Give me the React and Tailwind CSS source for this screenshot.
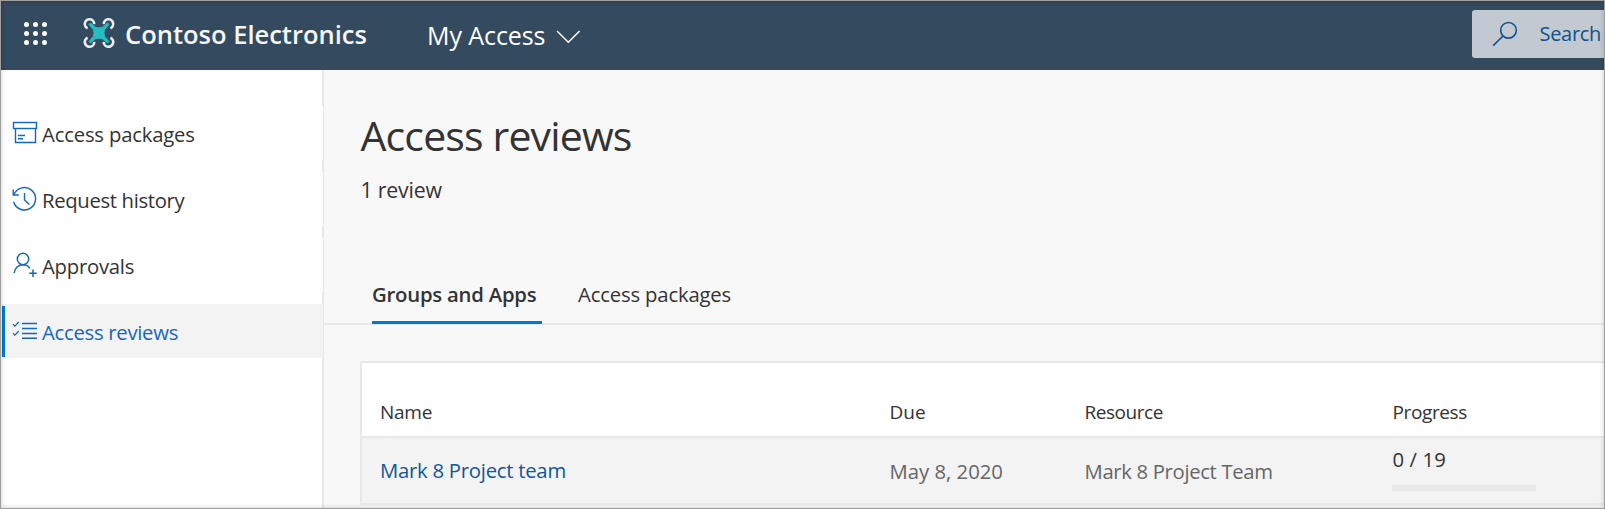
import React from "react";

function PackageIcon() {
  return (
    <svg width="26" height="26" viewBox="0 0 26 26" fill="none" stroke="#1467c0" strokeWidth="1.4">
      <rect x="1.5" y="2.5" width="23" height="6" />
      <path d="M3.5 8.5V22.5H23.5V8.5" />
      <path d="M6 15.5h7M6 18.7h5" />
    </svg>
  );
}

function HistoryIcon() {
  return (
    <svg width="26" height="26" viewBox="0 0 26 26" fill="none" stroke="#1467c0" strokeWidth="1.4">
      <path d="M2 8.6A11.2 11.2 0 1 1 1.6 15.8" />
      <path d="M1.2 3.6V9H6.8" />
      <path d="M12.5 7V14L17.5 18.5" />
    </svg>
  );
}

function ApprovalIcon() {
  return (
    <svg width="26" height="26" viewBox="0 0 26 26" fill="none" stroke="#1467c0" strokeWidth="1.5">
      <circle cx="11" cy="7" r="5.7" />
      <path d="M2.2 21C2.6 15.8 6.5 12.8 11 12.8c2.8 0 5.4 1.3 7 3.6" />
      <path d="M21 17.5v7.5M17.2 21.3h7.6" />
    </svg>
  );
}

function ReviewIcon() {
  return (
    <svg width="26" height="26" viewBox="0 0 26 26" fill="none" stroke="#1467c0" strokeWidth="1.4">
      <path d="M10 5.5h15M10 10.5h15M10 15.5h15M10 20.2h15" />
      <path d="M1 6.2l1.9 1.9L6.8 4M1 15.2l1.9 1.9L6.8 13" strokeWidth="1.2" />
    </svg>
  );
}

function DroneLogo() {
  return (
    <svg width="34" height="34" viewBox="0 0 34 34" fill="none">
      <g stroke="#e9edf0" strokeWidth="2.6">
        <path d="M5.6 12.2A4.7 4.7 0 1 1 12.2 8.2" />
        <path d="M21.8 8.2A4.7 4.7 0 1 1 28.4 12.2" />
        <path d="M5.6 21.8A4.7 4.7 0 1 0 12.2 25.8" />
        <path d="M21.8 25.8A4.7 4.7 0 1 0 28.4 21.8" />
      </g>
      <path
        d="M8.4 7L13.6 11.2Q17 12.6 20.4 11.2L25.6 7L27 8.4L22.6 13.6Q21.2 17 22.6 20.4L27 25.6L25.6 27L20.4 22.8Q17 21.4 13.6 22.8L8.4 27L7 25.6L11.4 20.4Q12.8 17 11.4 13.6L7 8.4Z"
        fill="#25bcc0"
        stroke="#25bcc0"
        strokeWidth="1"
        strokeLinejoin="round"
      />
    </svg>
  );
}

const nav = [
  { label: "Access packages", icon: <PackageIcon />, track: "tracking-[-0.19px]" },
  { label: "Request history", icon: <HistoryIcon />, track: "tracking-[-0.34px]" },
  { label: "Approvals", icon: <ApprovalIcon />, track: "tracking-[-0.25px]" },
  { label: "Access reviews", icon: <ReviewIcon />, track: "tracking-[-0.28px]", active: true },
];

const dots = [0, 1, 2, 3, 4, 5, 6, 7, 8];

function Header() {
  return (
    <header className="flex h-[70px] shrink-0 items-start bg-[#344a5f] text-white">
      <div className="mt-[22px] ml-6 grid grid-cols-3 gap-[4.5px]">
        {dots.map((d) => (
          <span key={d} className="size-[4.5px] rounded-full bg-white" />
        ))}
      </div>
      <div className="mt-4 ml-[35.5px]">
        <DroneLogo />
      </div>
      <div className="mt-[14px] ml-[9px] w-[301px] text-[25.5px] leading-10 font-semibold whitespace-nowrap text-[#f4f6f7]">
        Contoso Electronics
      </div>
      <div className="mt-[15px] ml-px flex items-start text-[25px] leading-10 tracking-[-0.08px] whitespace-nowrap">
        My Access
        <svg className="mt-[14px] ml-[11px]" width="26" height="16" viewBox="0 0 26 16" fill="none" stroke="white" strokeWidth="1.4">
          <path d="M1 2L12.3 13.3L23.6 2" />
        </svg>
      </div>
      <div className="mt-[10px] ml-auto flex h-12 w-[133px] items-start rounded-l-[3px] bg-[#c2c9d0] text-[20px] leading-[30px] tracking-[-0.3px] text-[#12508c]">
        <svg className="mt-[11px] ml-5" width="26" height="26" viewBox="0 0 26 26" fill="none" stroke="#12508c" strokeWidth="1.6">
          <circle cx="16.5" cy="9.3" r="7.8" />
          <path d="M11 15L1.2 24.6" />
        </svg>
        <span className="mt-[9px] ml-[21.5px]">Search</span>
      </div>
    </header>
  );
}

function Sidebar() {
  return (
    <nav className="w-[324px] shrink-0 bg-white">
      <div className="flex h-full flex-col gap-3 border-r-2 border-[#e8e8e8] pt-9">
        {nav.map((item) => (
          <div
            key={item.label}
            className={
              "-mr-px flex h-[54px] items-center " +
              (item.active ? "bg-[#f3f3f3] text-[#1467c0]" : "bg-white text-[#333333]")
            }
          >
            <div className={"ml-0.5 h-[51px] w-[3px] " + (item.active ? "bg-[#0078d4]" : "")} />
            <div className="ml-[6.5px]">{item.icon}</div>
            <div className={"ml-[4.5px] pt-0.5 text-[20.3px] leading-[30px] whitespace-nowrap " + item.track}>{item.label}</div>
          </div>
        ))}
      </div>
    </nav>
  );
}

function ReviewTable() {
  return (
    <div className="mt-9 ml-9 border-2 border-r-0 border-[#e8e8e8] bg-white whitespace-nowrap text-[#333333]">
      <div className="grid h-[75px] grid-cols-[509.5px_195px_308px_1fr] border-b-2 border-[#e8e8e8] pt-[34px] pl-[18px] text-[19px] leading-[30px]">
        <div className="tracking-[-0.25px]">Name</div>
        <div>Due</div>
        <div className="tracking-[-0.46px]">Resource</div>
        <div className="tracking-[-0.39px]">Progress</div>
      </div>
      <div className="grid h-[65px] grid-cols-[509.5px_195px_308px_1fr] bg-[#f3f3f3] pl-[18px] text-[20.3px] leading-[30px]">
        <div className="pt-[17px] tracking-[-0.25px] text-[#0f5799]">Mark 8 Project team</div>
        <div className="pt-[18px] text-[#666666]">May 8, 2020</div>
        <div className="pt-[18px] tracking-[-0.34px] text-[#666666]">Mark 8 Project Team</div>
        <div className="pt-1.5">
          <div className="tracking-[0.1px]">0 / 19</div>
          <div className="mt-[11px] -ml-[0.5px] h-1.5 w-36 bg-[#e8e8e8]" />
        </div>
      </div>
    </div>
  );
}

export default function App() {
  return (
    <div className="relative flex h-[509px] w-[1605px] flex-col overflow-hidden bg-[#f8f8f8] font-['Open_Sans','Noto_Sans',sans-serif]">
      <Header />
      <div className="flex min-h-0 flex-1">
        <Sidebar />
        <main className="min-w-0 flex-1 text-[#333333]">
          <h1 className="mt-[37px] ml-[36.5px] text-[41px] leading-[56px] tracking-[-0.85px]">Access reviews</h1>
          <p className="mt-3 ml-[36.5px] text-[21.3px] leading-[30px] tracking-[-0.2px]">1 review</p>
          <div className="mt-[74px] flex h-[46px] items-start border-b-2 border-[#e8e8e8] pl-12 text-[20.3px] leading-[30px] whitespace-nowrap">
            <div className="h-[45px] w-[170px] border-b-[3px] border-[#0078d4] font-semibold tracking-[-0.21px]">Groups and Apps</div>
            <div className="ml-9 tracking-[-0.17px]">Access packages</div>
          </div>
          <ReviewTable />
        </main>
      </div>
      <div className="pointer-events-none absolute inset-0 border border-[#a0a0a0] shadow-[inset_0_0_5px_rgba(0,0,0,0.2)]" />
    </div>
  );
}
